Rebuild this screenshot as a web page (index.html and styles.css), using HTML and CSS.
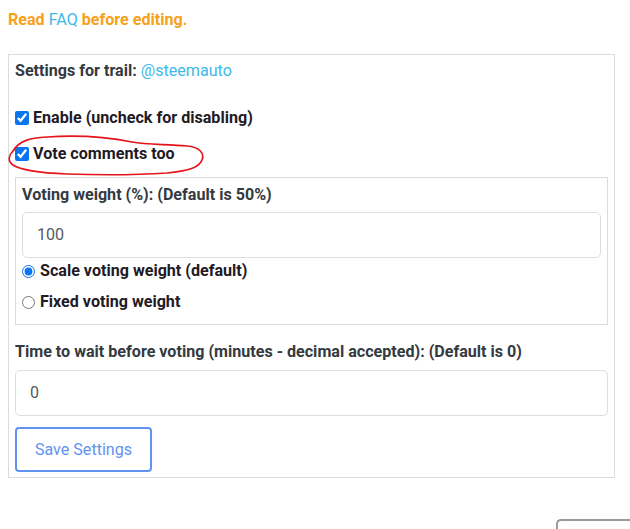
FILE: index.html
```html
<!DOCTYPE html>
<html>
<head>
<meta charset="utf-8">
<link rel="stylesheet" href="styles.css">
</head>
<body>
<p class="notice">Read <a class="link" href="#">FAQ</a> before editing.</p>
<div class="panel">
  <div class="trail">Settings for trail: <a class="link" href="#">@steemauto</a></div>
  <label class="check first"><input type="checkbox" checked> Enable (uncheck for disabling)</label>
  <div class="circled">
    <label class="check"><input type="checkbox" checked> Vote comments too</label>
    <svg class="scribble" width="205" height="44" viewBox="0 0 205 44">
      <path d="M6 16 C 12 6, 22 3, 40 2 C 70 0, 100 2, 125 7 C 140 10, 160 9, 180 11 C 192 12, 198 18, 195 25 C 192 33, 180 36, 160 38 C 130 40, 90 40, 60 39 C 35 38, 15 36, 6 30 C 0 26, 2 20, 6 16" fill="none" stroke="#e3151a" stroke-width="1.7" stroke-linecap="round"/>
    </svg>
  </div>
  <div class="subpanel">
    <div class="label">Voting weight (%): (Default is 50%)</div>
    <div class="field">100</div>
    <label class="check scale"><input class="radio" type="radio" name="w" checked> Scale voting weight (default)</label>
    <label class="check second"><input class="radio" type="radio" name="w"> Fixed voting weight</label>
  </div>
  <div class="label outer-label">Time to wait before voting (minutes - decimal accepted): (Default is 0)</div>
  <div class="field">0</div>
  <button class="save">Save Settings</button>
</div>
<div class="footer"><span class="cut"></span></div>
</body>
</html>
```
FILE: styles.css
```css
html, body {
  margin: 0;
  padding: 0;
  background: #fff;
}
body {
  padding: 8px 0 0 8px;
  font-family: Roboto, "Liberation Sans", sans-serif;
  font-size: 16.1px;
  line-height: 24px;
  color: #212529;
  overflow: hidden;
}
.notice {
  margin: 0;
  color: #f6a11c;
  font-weight: 700;
}
.link {
  color: #3fb8e8;
  font-weight: 400;
  text-decoration: none;
}
.panel {
  margin-top: 22px;
  width: 593px;
  border: 1px solid #dcdcdc;
  padding: 4px 6px 5px;
}
.trail {
  font-weight: 700;
  color: #343a40;
}
.check {
  display: flex;
  align-items: center;
  font-weight: 700;
  color: #1f1a24;
}
.check input {
  width: 14px;
  height: 14px;
  margin: 0 4px 0 0;
  accent-color: #0b75f0;
}
.check .radio {
  width: 13px;
  height: 13px;
  margin: 0 5px 0 0;
}
.first {
  margin-top: 23px;
}
.circled {
  position: relative;
  margin-top: 12px;
}
.scribble {
  position: absolute;
  left: -8px;
  top: -7px;
  pointer-events: none;
}
.subpanel {
  margin-top: 11px;
  border: 1px solid #dcdcdc;
  padding: 5px 6px 10px;
}
.label {
  font-weight: 700;
  color: #343a40;
}
.field {
  margin-top: 6px;
  height: 44px;
  border: 1px solid #dedede;
  border-radius: 5px;
  padding: 0 14px;
  display: flex;
  align-items: center;
  color: #555a60;
}
.subpanel .field {
  margin-top: 5px;
}
.scale {
  margin-top: 1px;
}
.second {
  margin-top: 7px;
}
.outer-label {
  margin-top: 15px;
}
.save {
  display: block;
  margin-top: 11px;
  width: 137px;
  height: 45px;
  border: 2px solid #6192f0;
  border-radius: 4px;
  background: #fff;
  color: #6192f0;
  font-family: Roboto, "Liberation Sans", sans-serif;
  font-size: 16.1px;
  padding: 0;
}
.footer {
  display: flex;
  justify-content: flex-end;
  margin-top: 41px;
}
.cut {
  display: block;
  width: 72px;
  height: 20px;
  border: 2px solid #999;
  border-right: none;
  border-bottom: none;
  border-radius: 5px 0 0 0;
}
```
